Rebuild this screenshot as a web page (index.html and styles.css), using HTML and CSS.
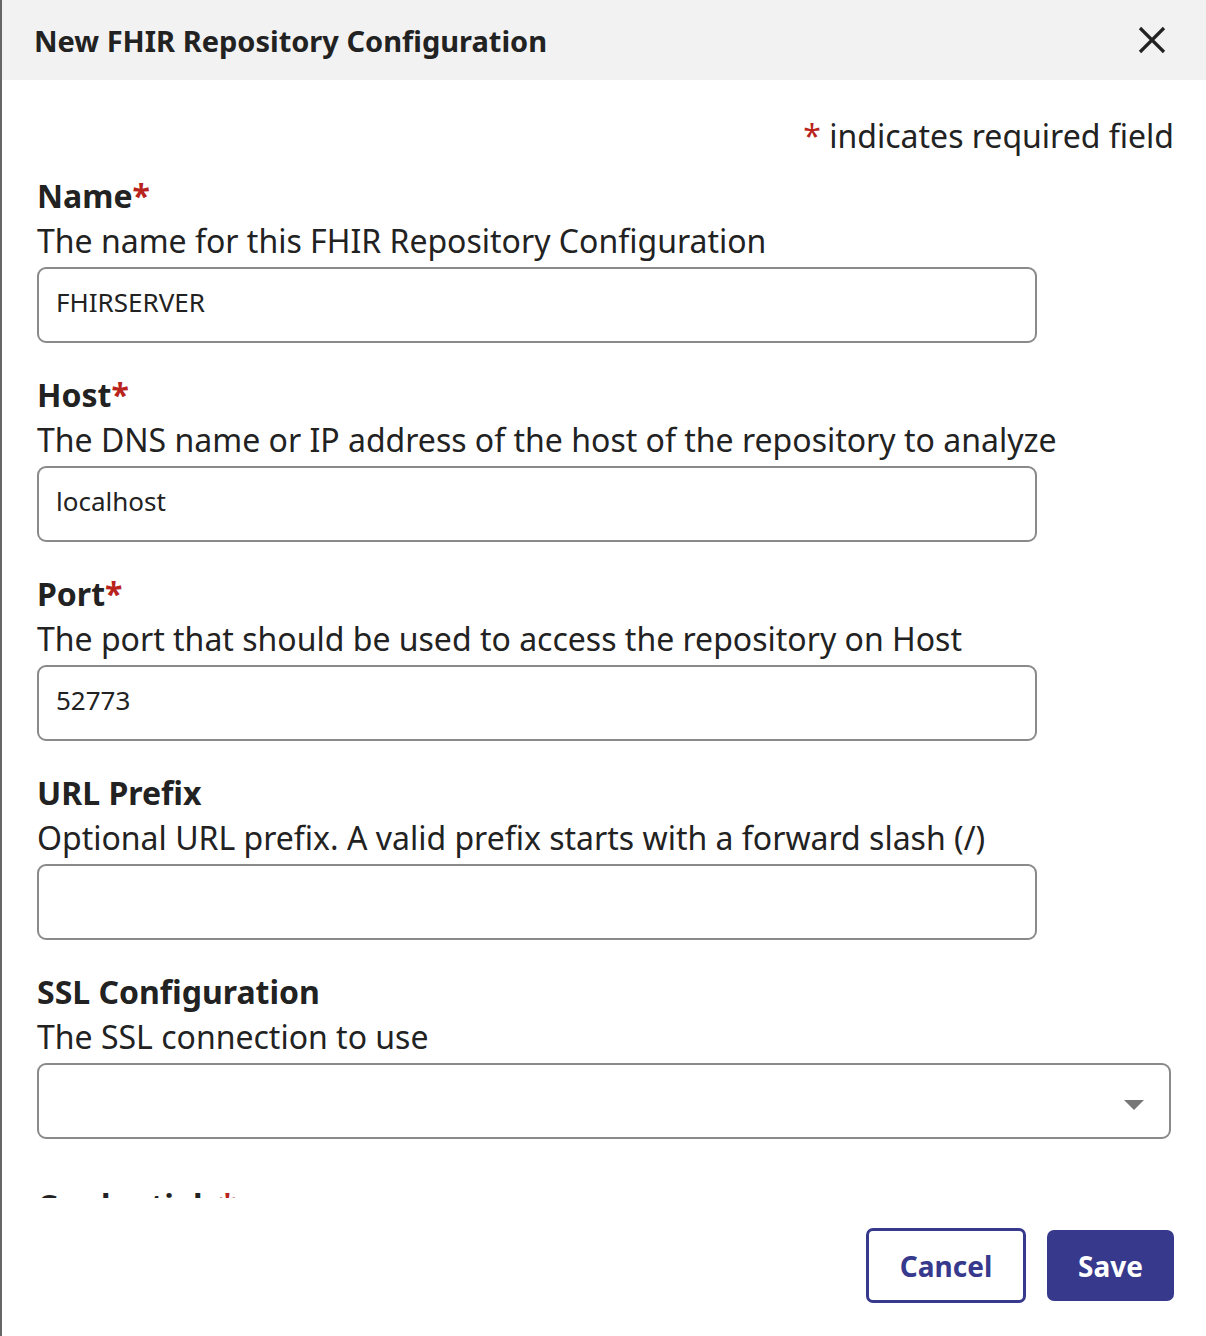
FILE: index.html
```html
<!DOCTYPE html>
<html lang="en">
<head>
<meta charset="utf-8">
<title>New FHIR Repository Configuration</title>
<link rel="stylesheet" href="styles.css">
</head>
<body>
<div class="dialog">
  <header class="dialog-header">
    <h1 class="dialog-title">New FHIR Repository Configuration</h1>
    <button class="close-btn" aria-label="Close">
      <svg width="28" height="28" viewBox="0 0 28 28"><path d="M2 2 L26 26 M26 2 L2 26" stroke="#222" stroke-width="3.2" fill="none"/></svg>
    </button>
  </header>
  <div class="dialog-body">
    <p class="required-note"><span class="req">*</span> indicates required field</p>

    <div class="field">
      <label class="field-label">Name<span class="req">*</span></label>
      <div class="field-desc">The name for this FHIR Repository Configuration</div>
      <div class="input">FHIRSERVER</div>
    </div>

    <div class="field">
      <label class="field-label">Host<span class="req">*</span></label>
      <div class="field-desc">The DNS name or IP address of the host of the repository to analyze</div>
      <div class="input">localhost</div>
    </div>

    <div class="field">
      <label class="field-label">Port<span class="req">*</span></label>
      <div class="field-desc">The port that should be used to access the repository on Host</div>
      <div class="input">52773</div>
    </div>

    <div class="field">
      <label class="field-label">URL Prefix</label>
      <div class="field-desc">Optional URL prefix. A valid prefix starts with a forward slash (/)</div>
      <div class="input"></div>
    </div>

    <div class="field field-select">
      <label class="field-label">SSL Configuration</label>
      <div class="field-desc">The SSL connection to use</div>
      <div class="input select">
        <span class="caret"></span>
      </div>
    </div>

    <div class="field">
      <label class="field-label">Credentials<span class="req">*</span></label>
      <div class="field-desc">The credentials to use</div>
    </div>
  </div>
  <footer class="dialog-footer">
    <button class="btn btn-outline">Cancel</button>
    <button class="btn btn-primary">Save</button>
  </footer>
</div>
</body>
</html>
```

FILE: styles.css
```css
* { box-sizing: border-box; }
html, body { margin: 0; padding: 0; background: #fff; }
body {
  font-family: "Noto Sans", "Open Sans", sans-serif;
  color: #222;
}
.dialog {
  width: 1206px;
  height: 1336px;
  border-left: 2px solid #666;
  display: flex;
  flex-direction: column;
  overflow: hidden;
}
.dialog-header {
  height: 80px;
  flex: none;
  background: #f2f2f2;
  display: flex;
  align-items: center;
  justify-content: space-between;
  padding: 0 40px 0 32px;
}
.dialog-title {
  margin: 0;
  font-size: 29px;
  font-weight: 700;
  color: #222;
}
.close-btn {
  border: 0;
  background: none;
  padding: 0;
  width: 28px;
  height: 28px;
  display: flex;
}
.dialog-body {
  flex: 1;
  overflow: hidden;
  padding: 33px 32px 0 35px;
}
.required-note {
  margin: 0 0 15px;
  text-align: right;
  font-size: 32px;
  line-height: 45px;
}
.req { color: #b8231b; }
.field {
  margin-bottom: 29px;
}
.field-select { margin-bottom: 44px; }
.field-label {
  display: block;
  font-size: 32px;
  font-weight: 700;
  line-height: 45px;
}
.field-desc {
  font-size: 32px;
  line-height: 45px;
  margin-bottom: 4px;
  white-space: nowrap;
}
.input {
  width: 1000px;
  height: 76px;
  border: 2px solid #8a8a8a;
  border-radius: 9px;
  padding: 0 17px 7px;
  font-size: 26px;
  display: flex;
  align-items: center;
  color: #222;
}
.select {
  width: 1134px;
  justify-content: flex-end;
  padding: 0 25px 0 17px;
}
.caret {
  width: 0;
  height: 0;
  margin-top: 7px;
  border-left: 10px solid transparent;
  border-right: 10px solid transparent;
  border-top: 10px solid #777;
}
.dialog-footer {
  height: 138px;
  flex: none;
  display: flex;
  justify-content: flex-end;
  align-items: center;
  gap: 21px;
  padding: 0 32px 3px 0;
}
.btn {
  font-family: "Noto Sans", "Open Sans", sans-serif;
  font-size: 28px;
  font-weight: 700;
  border-radius: 7px;
  cursor: pointer;
}
.btn-outline {
  width: 160px;
  height: 75px;
  background: #fff;
  color: #36398c;
  border: 3px solid #36398c;
}
.btn-primary {
  width: 127px;
  height: 71px;
  background: #36398c;
  color: #fff;
  border: 0;
}
```
